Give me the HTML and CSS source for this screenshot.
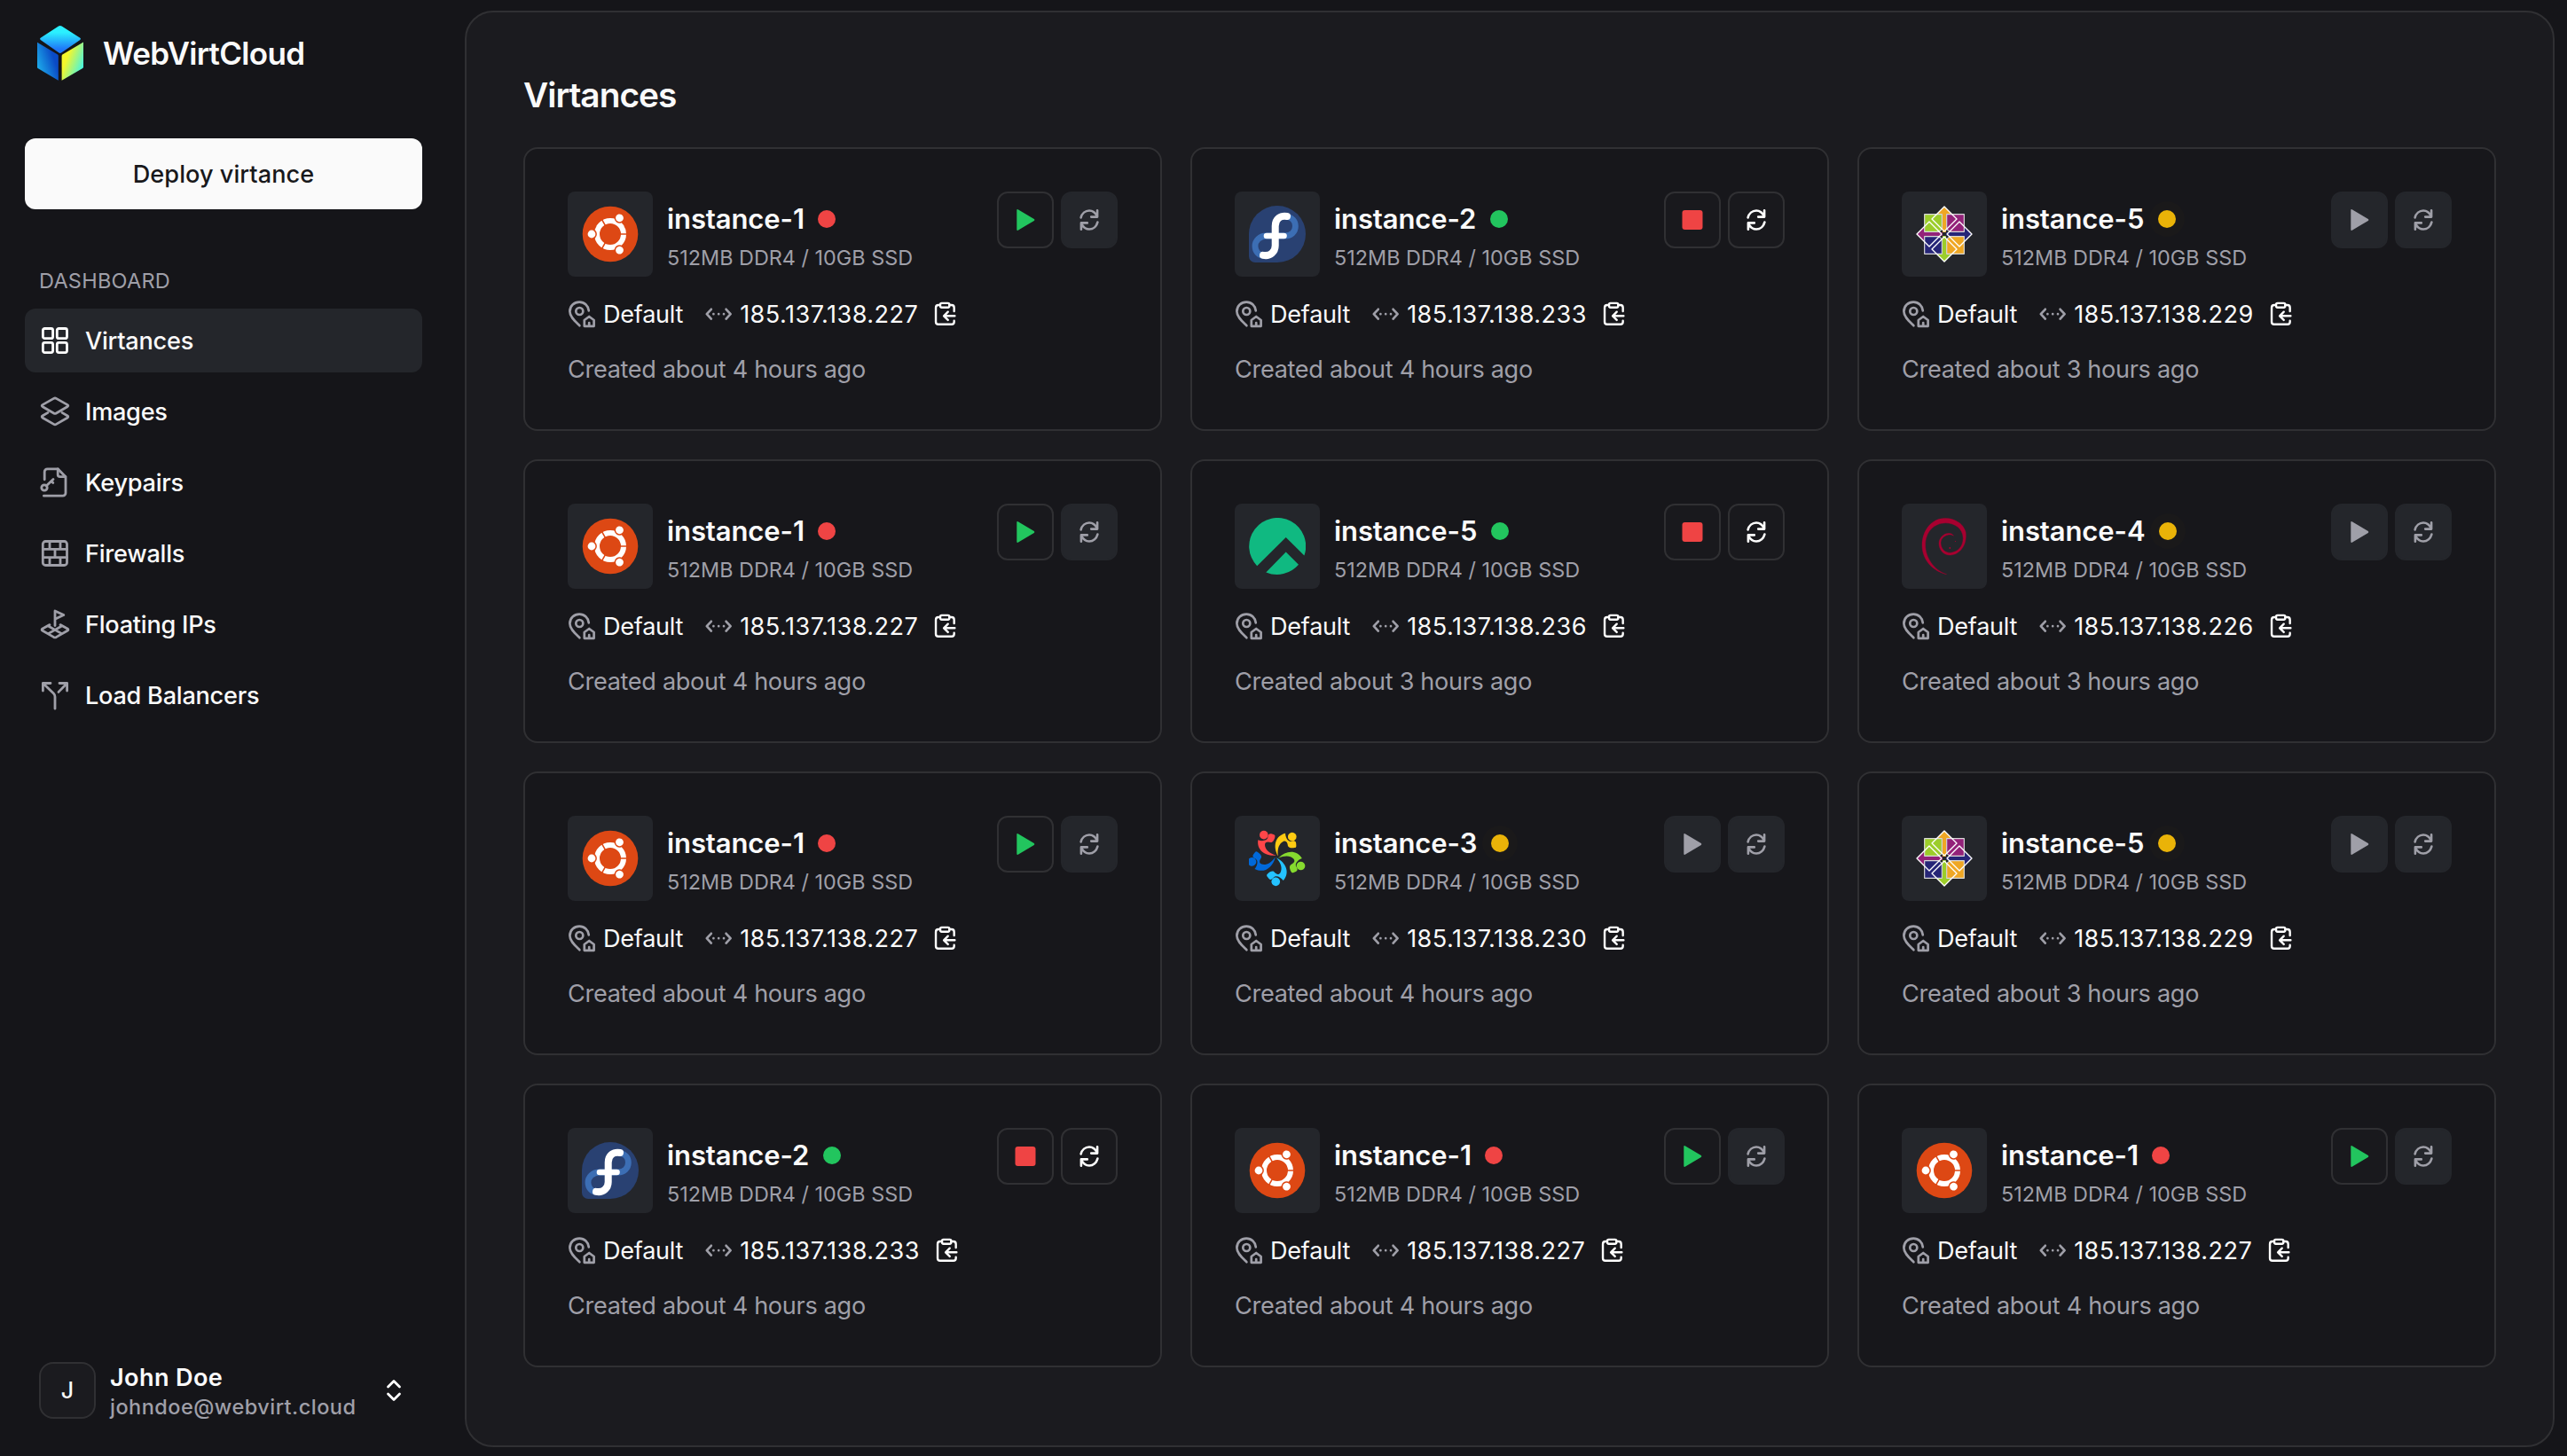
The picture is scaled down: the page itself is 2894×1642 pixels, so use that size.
FILE: index.html
```html
<!DOCTYPE html>
<html lang="en">
<head>
<meta charset="utf-8">
<title>Virtances - WebVirtCloud</title>
<link rel="stylesheet" href="styles.css">
</head>
<body>
<svg class="sprite" aria-hidden="true">
  <defs>
    <linearGradient id="cube-top" x1="0" y1="0" x2="0" y2="1"><stop offset=".25" stop-color="#2bf0ff"/><stop offset=".85" stop-color="#1f78f8"/></linearGradient>
    <linearGradient id="cube-left" x1=".75" y1=".35" x2="0" y2=".8"><stop offset="0" stop-color="#0a4ac6"/><stop offset="1" stop-color="#1fb6ee"/></linearGradient>
    <linearGradient id="cube-right" x1=".2" y1=".3" x2=".9" y2=".75"><stop offset=".1" stop-color="#f5f62b"/><stop offset="1" stop-color="#4af5dc"/></linearGradient>
  </defs>
  <symbol id="logo" viewBox="42 28 52 64">
    <path fill="url(#cube-top)" d="M66 29.6q1.800-1.200 3.600 0L90.300 42.800q1.400 1.100 0 2.200L69.500 59.300q-1.700 1.200-3.400 0L45.700 45q-1.400-1.100 0-2.200z"/>
    <path fill="url(#cube-left)" d="M41.800 47.600L65 61.500q.8.600.8 1.600V90.700L42.600 76.900q-.8-.6-.8-1.600z"/>
    <path fill="url(#cube-right)" d="M94 47.600L70.400 61.500q-.8.600-.8 1.600V90.700L93.200 76.900q.8-.6.8-1.600z"/>
  </symbol>
  <symbol id="grid" viewBox="0 0 18 18"><rect x="2.200" y="2.250" width="5.600" height="5.600" rx="1"/><rect x="10.150" y="2.250" width="5.600" height="5.600" rx="1"/><rect x="2.200" y="10.200" width="5.600" height="5.600" rx="1"/><rect x="10.150" y="10.200" width="5.600" height="5.600" rx="1"/></symbol>
  <symbol id="layers" viewBox="0 0 18 18"><path d="M8.300 1.700q.7-.4 1.400 0L15.900 5.200q1 .6 0 1.200L9.700 10q-.7.400-1.400 0L2.100 6.400q-1-.6 0-1.200z"/><path d="M5 9.700L2.100 11.400q-1 .6 0 1.200L8.300 16.200q.7.400 1.400 0L15.900 12.600q1-.6 0-1.200L13 9.700"/></symbol>
  <symbol id="keyfile" viewBox="0 0 18 18"><path d="M3.100 7.400V3a1.600 1.600 0 0 1 1.600-1.600H10.600L15 5.900V15a1.600 1.600 0 0 1-1.600 1.600H2.700"/><path d="M10.600 1.500V4.600a1.200 1.200 0 0 0 1.200 1.200H14.900"/><circle cx="3" cy="12" r="1.600"/><path d="M4.200 10.900L8 7.200M6.900 8.300L7.900 9.300"/></symbol>
  <symbol id="wall" viewBox="0 0 18 18"><rect x="2.150" y="2.250" width="13.600" height="13.500" rx="1.500"/><path d="M2.200 6.700H15.700M2.200 11.300H15.700M6 2.300V6.700M12 2.300V6.700M9 6.700V11.300M6 11.300V15.700M12 11.300V15.700"/></symbol>
  <symbol id="flag" viewBox="0 0 18 18"><path d="M9 9.800V1.500L13.900 3.800L9 6.100"/><path d="M6 9.300L2 11.500q-.9.600 0 1.100L8.200 16.200q.8.400 1.600 0L16 12.600q.9-.5 0-1.100L12 9.300M5.200 14.300L12.800 10M12.800 14.300L5.200 10"/></symbol>
  <symbol id="split" viewBox="0 0 18 18"><path d="M2.200 6.500V2.250H6.500M2.200 2.250L8.200 8q.8.800.8 1.900V16.600M11.500 2.250H15.800V6.500M15.800 2.250L11 7.200"/></symbol>
  <symbol id="updown" viewBox="0 0 36 36"><path d="M11.500 14L18 7.500L24.500 14M11.500 22L18 28.500L24.500 22"/></symbol>
  <symbol id="pin" viewBox="0 0 18 18"><path d="M6.700 15.600C4.200 13.200 1.200 10.700 1.200 7.600C1.200 4.400 3.700 2.300 6.600 2.300S11.700 4.500 11.900 7.200"/><circle cx="6.650" cy="7.500" r="2"/><path d="M9.400 12.500L12.100 10.500L14.800 12.500V15.900H9.400zM12.100 15.600V14"/></symbol>
  <symbol id="net" viewBox="0 0 18 18"><path d="M4.900 6.400L2.400 9.100L4.900 11.800M13.300 6.400L15.800 9.100L13.300 11.800"/><path d="M6.200 9.100h.01M9.100 9.100h.01M12 9.100h.01"/></symbol>
  <symbol id="clip" viewBox="0 0 18 18"><path d="M5.900 3.400H5A1.600 1.600 0 0 0 3.400 5V14A1.600 1.600 0 0 0 5 15.600H13.400A1.600 1.600 0 0 0 15 14V13.300M15 7.300V5A1.600 1.600 0 0 0 13.400 3.400H12.100"/><rect x="6.200" y="2.200" width="5.800" height="2.700" rx=".9"/><path d="M15.400 10.300H8.600M11.100 7.700L8.500 10.300L11.100 12.900"/></symbol>
  <symbol id="sync" viewBox="0 0 32 32"><path d="M6.600 13.400C7.800 8.800 11.500 5.500 16 5.500C19.800 5.500 22.800 7.600 24.900 12M25.100 5.200V12.600H18.200"/><path d="M25.400 18.600C24.200 23.200 20.500 26.500 16 26.500C12.200 26.500 9.200 24.400 7.100 20M6.900 26.800V19.400H13.800"/></symbol>
  <symbol id="play" viewBox="0 0 32 32"><path d="M6.300 5.200q0-1.700 1.400-.9L25.800 15q1.200.9 0 1.900L7.700 27.700q-1.400.8-1.400-.9z"/></symbol>
  <symbol id="stop" viewBox="0 0 32 32"><rect x="4.500" y="5" width="23" height="22" rx="3"/></symbol>

  <symbol id="ubuntu" viewBox="-32 -32 64 64">
    <circle r="31.300" fill="#dd4814"/>
    <circle r="15" fill="none" stroke="#fff" stroke-width="6"/>
    <g id="ub-arm"><path d="M10 0H20" stroke="#dd4814" stroke-width="1.600"/><circle cx="-21" r="5.900" fill="#dd4814"/><circle cx="-21" r="4.400" fill="#fff"/></g>
    <use href="#ub-arm" transform="rotate(120)"/><use href="#ub-arm" transform="rotate(240)"/>
  </symbol>
  <symbol id="fedora" viewBox="0 0 64 64">
    <path fill="#294172" d="M32 0A32 32 0 0 1 32 64H7A7 7 0 0 1 0 57V32A32 32 0 0 1 32 0z"/>
    <g fill="none" stroke-linecap="round"><path stroke="#3c6eb4" stroke-width="6.800" d="M42 12C49 13 52.400 18 52.400 23C52.400 29.500 47.500 34 41 34H20C12 34 7 39.500 7 45.500C7 51.500 11 56 16 56"/>
    <path stroke="#fff" stroke-width="8" d="M43 12C35.500 10.600 29.700 15 29.700 23V45C29.700 52 24 57.500 16 55.800"/><path stroke="#fff" stroke-width="6.600" d="M20 34H39.500"/></g>
  </symbol>
  <symbol id="rocky" viewBox="0 0 64 64"><path fill="#10b981" d="M9.200 54.200A32 32 0 1 1 62.400 42.600L41.700 22zM19.300 61.400L41.700 38.500L56 52.800A32 32 0 0 1 19.300 61.400z"/></symbol>
  <symbol id="debian" viewBox="0 0 64 64"><path fill="#a80030" stroke="#a80030" stroke-width=".4" d="M34.300 63.700C16 59 7 45 7 31C7 14 18 .6 32.500 .6C39 .3 44 2.500 47 4.500C51 6.500 54 10 56 16C58 30 50 41.600 38.500 42C30 42 26 35 26 29C26 22 32 17 37.500 17.500C40 17.600 41.500 18.700 42.500 20.200C40 18.800 38 18.700 36 19.200C31 20.500 27.700 24 28 29C28.300 35 33 39.700 39 39.400C47 38.500 53 33 53.200 23C53 12 44 6 33.500 5.800C20 6 10.600 16 10.600 31C10.600 44 20 59 34.300 63.700z"/><circle cx="38.300" cy="34" r=".9" fill="#a80030"/><circle cx="44.500" cy="26.500" r=".6" fill="#a80030"/></symbol>
  <symbol id="almalinux" viewBox="84 78 192 192">
    <g fill="#ff4649"><circle cx="134.500" cy="95" r="14.500"/><path d="M177 164C138 168 110 146 115 112C128 117 146 115 148 103Q149 88 160 91L169 94Q174 96 172 102C170 112 165 120 158 120C147 117 138 118 138 129C139 144 152 157 177 164z"/></g>
    <g transform="rotate(68 178 169)" fill="#ffcb12"><circle cx="134.500" cy="95" r="14.500"/><path d="M177 164C138 168 110 146 115 112C128 117 146 115 148 103Q149 88 160 91L169 94Q174 96 172 102C170 112 165 120 158 120C147 117 138 118 138 129C139 144 152 157 177 164z"/></g>
    <g transform="rotate(140 178 170)" fill="#86da2f"><circle cx="134.500" cy="95" r="14.500"/><path d="M177 164C138 168 110 146 115 112C128 117 146 115 148 103Q149 88 160 91L169 94Q174 96 172 102C170 112 165 120 158 120C147 117 138 118 138 129C139 144 152 157 177 164z"/></g>
    <g transform="rotate(213 178 168)" fill="#24c2ff"><circle cx="134.500" cy="95" r="14.500"/><path d="M177 164C138 168 110 146 115 112C128 117 146 115 148 103Q149 88 160 91L169 94Q174 96 172 102C170 112 165 120 158 120C147 117 138 118 138 129C139 144 152 157 177 164z"/></g>
    <g transform="rotate(290 179 169)" fill="#0069da"><circle cx="134.500" cy="95" r="14.500"/><path d="M177 164C138 168 110 146 115 112C128 117 146 115 148 103Q149 88 160 91L169 94Q174 96 172 102C170 112 165 120 158 120C147 117 138 118 138 129C139 144 152 157 177 164z"/></g>
  </symbol>
  <symbol id="centos" viewBox="78 78 192 192">
    <path fill="#efa724" d="M174 80L201 107H180V168H168V107H147z"/><path fill="#932279" d="M80 174L107 147V168H168V180H107V201z"/><path fill="#262577" d="M268 174L241 147V168H180V180H241V201z"/><path fill="#9ccd2a" d="M174 268L201 241H180V180H168V241H147z"/>
    <g stroke="#d9d9d9" stroke-width="3.500"><path fill="#9ccd2a" d="M107 107H166V157L155 166H107z"/><path fill="#932279" d="M182 107H241V166H193L182 157z"/><path fill="#262577" d="M107 182H155L166 191V241H107z"/><path fill="#efa724" d="M193 182H241V241H182V191z"/></g>
    <path fill="none" stroke="#fff" stroke-width="4" d="M174 81L216 123L174 165L132 123zM174 183L216 225L174 267L132 225zM81 174L123 132L165 174L123 216zM183 174L225 132L267 174L225 216z"/>
    <circle cx="174" cy="174" r="7" fill="#24262a"/>
  </symbol>
</svg>

<div class="app">
  <aside class="sidebar">
    <div class="brand"><svg class="brand-mark"><use href="#logo"/></svg><span>WebVirtCloud</span></div>
    <button class="deploy">Deploy virtance</button>
    <h2 class="nav-title">DASHBOARD</h2>
    <nav class="nav">
      <a class="nav-item active"><svg class="icon"><use href="#grid"/></svg><span>Virtances</span></a>
      <a class="nav-item"><svg class="icon"><use href="#layers"/></svg><span>Images</span></a>
      <a class="nav-item"><svg class="icon"><use href="#keyfile"/></svg><span>Keypairs</span></a>
      <a class="nav-item"><svg class="icon"><use href="#wall"/></svg><span>Firewalls</span></a>
      <a class="nav-item"><svg class="icon"><use href="#flag"/></svg><span>Floating IPs</span></a>
      <a class="nav-item"><svg class="icon"><use href="#split"/></svg><span>Load Balancers</span></a>
    </nav>
    <div class="account">
      <span class="avatar">J</span>
      <div class="who"><span class="name">John Doe</span><span class="email">johndoe@webvirt.cloud</span></div>
      <svg class="switcher"><use href="#updown"/></svg>
    </div>
  </aside>

  <main class="panel">
    <h1 class="title">Virtances</h1>
    <div class="cards">
      <article class="card">
        <header class="head"><div class="os"><svg><use href="#ubuntu"/></svg></div><div class="info"><h3>instance-1<i class="dot off"></i></h3><p>512MB DDR4 / 10GB SSD</p></div><div class="acts"><button class="act start"><svg><use href="#play"/></svg></button><button class="act" disabled><svg><use href="#sync"/></svg></button></div></header>
        <div class="meta"><svg class="m-icon"><use href="#pin"/></svg><span class="region">Default</span><svg class="m-icon"><use href="#net"/></svg><span class="ip">185.137.138.227</span><svg class="copy"><use href="#clip"/></svg></div>
        <p class="created">Created about 4 hours ago</p>
      </article>
      <article class="card">
        <header class="head"><div class="os"><svg><use href="#fedora"/></svg></div><div class="info"><h3>instance-2<i class="dot on"></i></h3><p>512MB DDR4 / 10GB SSD</p></div><div class="acts"><button class="act halt"><svg><use href="#stop"/></svg></button><button class="act"><svg><use href="#sync"/></svg></button></div></header>
        <div class="meta"><svg class="m-icon"><use href="#pin"/></svg><span class="region">Default</span><svg class="m-icon"><use href="#net"/></svg><span class="ip">185.137.138.233</span><svg class="copy"><use href="#clip"/></svg></div>
        <p class="created">Created about 4 hours ago</p>
      </article>
      <article class="card">
        <header class="head"><div class="os"><svg><use href="#centos"/></svg></div><div class="info"><h3>instance-5<i class="dot busy"></i></h3><p>512MB DDR4 / 10GB SSD</p></div><div class="acts"><button class="act start" disabled><svg><use href="#play"/></svg></button><button class="act" disabled><svg><use href="#sync"/></svg></button></div></header>
        <div class="meta"><svg class="m-icon"><use href="#pin"/></svg><span class="region">Default</span><svg class="m-icon"><use href="#net"/></svg><span class="ip">185.137.138.229</span><svg class="copy"><use href="#clip"/></svg></div>
        <p class="created">Created about 3 hours ago</p>
      </article>
      <article class="card">
        <header class="head"><div class="os"><svg><use href="#ubuntu"/></svg></div><div class="info"><h3>instance-1<i class="dot off"></i></h3><p>512MB DDR4 / 10GB SSD</p></div><div class="acts"><button class="act start"><svg><use href="#play"/></svg></button><button class="act" disabled><svg><use href="#sync"/></svg></button></div></header>
        <div class="meta"><svg class="m-icon"><use href="#pin"/></svg><span class="region">Default</span><svg class="m-icon"><use href="#net"/></svg><span class="ip">185.137.138.227</span><svg class="copy"><use href="#clip"/></svg></div>
        <p class="created">Created about 4 hours ago</p>
      </article>
      <article class="card">
        <header class="head"><div class="os"><svg><use href="#rocky"/></svg></div><div class="info"><h3>instance-5<i class="dot on"></i></h3><p>512MB DDR4 / 10GB SSD</p></div><div class="acts"><button class="act halt"><svg><use href="#stop"/></svg></button><button class="act"><svg><use href="#sync"/></svg></button></div></header>
        <div class="meta"><svg class="m-icon"><use href="#pin"/></svg><span class="region">Default</span><svg class="m-icon"><use href="#net"/></svg><span class="ip">185.137.138.236</span><svg class="copy"><use href="#clip"/></svg></div>
        <p class="created">Created about 3 hours ago</p>
      </article>
      <article class="card">
        <header class="head"><div class="os"><svg><use href="#debian"/></svg></div><div class="info"><h3>instance-4<i class="dot busy"></i></h3><p>512MB DDR4 / 10GB SSD</p></div><div class="acts"><button class="act start" disabled><svg><use href="#play"/></svg></button><button class="act" disabled><svg><use href="#sync"/></svg></button></div></header>
        <div class="meta"><svg class="m-icon"><use href="#pin"/></svg><span class="region">Default</span><svg class="m-icon"><use href="#net"/></svg><span class="ip">185.137.138.226</span><svg class="copy"><use href="#clip"/></svg></div>
        <p class="created">Created about 3 hours ago</p>
      </article>
      <article class="card">
        <header class="head"><div class="os"><svg><use href="#ubuntu"/></svg></div><div class="info"><h3>instance-1<i class="dot off"></i></h3><p>512MB DDR4 / 10GB SSD</p></div><div class="acts"><button class="act start"><svg><use href="#play"/></svg></button><button class="act" disabled><svg><use href="#sync"/></svg></button></div></header>
        <div class="meta"><svg class="m-icon"><use href="#pin"/></svg><span class="region">Default</span><svg class="m-icon"><use href="#net"/></svg><span class="ip">185.137.138.227</span><svg class="copy"><use href="#clip"/></svg></div>
        <p class="created">Created about 4 hours ago</p>
      </article>
      <article class="card">
        <header class="head"><div class="os"><svg><use href="#almalinux"/></svg></div><div class="info"><h3>instance-3<i class="dot busy"></i></h3><p>512MB DDR4 / 10GB SSD</p></div><div class="acts"><button class="act start" disabled><svg><use href="#play"/></svg></button><button class="act" disabled><svg><use href="#sync"/></svg></button></div></header>
        <div class="meta"><svg class="m-icon"><use href="#pin"/></svg><span class="region">Default</span><svg class="m-icon"><use href="#net"/></svg><span class="ip">185.137.138.230</span><svg class="copy"><use href="#clip"/></svg></div>
        <p class="created">Created about 4 hours ago</p>
      </article>
      <article class="card">
        <header class="head"><div class="os"><svg><use href="#centos"/></svg></div><div class="info"><h3>instance-5<i class="dot busy"></i></h3><p>512MB DDR4 / 10GB SSD</p></div><div class="acts"><button class="act start" disabled><svg><use href="#play"/></svg></button><button class="act" disabled><svg><use href="#sync"/></svg></button></div></header>
        <div class="meta"><svg class="m-icon"><use href="#pin"/></svg><span class="region">Default</span><svg class="m-icon"><use href="#net"/></svg><span class="ip">185.137.138.229</span><svg class="copy"><use href="#clip"/></svg></div>
        <p class="created">Created about 3 hours ago</p>
      </article>
      <article class="card">
        <header class="head"><div class="os"><svg><use href="#fedora"/></svg></div><div class="info"><h3>instance-2<i class="dot on"></i></h3><p>512MB DDR4 / 10GB SSD</p></div><div class="acts"><button class="act halt"><svg><use href="#stop"/></svg></button><button class="act"><svg><use href="#sync"/></svg></button></div></header>
        <div class="meta"><svg class="m-icon"><use href="#pin"/></svg><span class="region">Default</span><svg class="m-icon"><use href="#net"/></svg><span class="ip">185.137.138.233</span><svg class="copy"><use href="#clip"/></svg></div>
        <p class="created">Created about 4 hours ago</p>
      </article>
      <article class="card">
        <header class="head"><div class="os"><svg><use href="#ubuntu"/></svg></div><div class="info"><h3>instance-1<i class="dot off"></i></h3><p>512MB DDR4 / 10GB SSD</p></div><div class="acts"><button class="act start"><svg><use href="#play"/></svg></button><button class="act" disabled><svg><use href="#sync"/></svg></button></div></header>
        <div class="meta"><svg class="m-icon"><use href="#pin"/></svg><span class="region">Default</span><svg class="m-icon"><use href="#net"/></svg><span class="ip">185.137.138.227</span><svg class="copy"><use href="#clip"/></svg></div>
        <p class="created">Created about 4 hours ago</p>
      </article>
      <article class="card">
        <header class="head"><div class="os"><svg><use href="#ubuntu"/></svg></div><div class="info"><h3>instance-1<i class="dot off"></i></h3><p>512MB DDR4 / 10GB SSD</p></div><div class="acts"><button class="act start"><svg><use href="#play"/></svg></button><button class="act" disabled><svg><use href="#sync"/></svg></button></div></header>
        <div class="meta"><svg class="m-icon"><use href="#pin"/></svg><span class="region">Default</span><svg class="m-icon"><use href="#net"/></svg><span class="ip">185.137.138.227</span><svg class="copy"><use href="#clip"/></svg></div>
        <p class="created">Created about 4 hours ago</p>
      </article>
    </div>
  </main>
</div>
</body>
</html>
```

FILE: styles.css
```css
:root {
  --bg: #151519;
  --panel: #1b1b1f;
  --card: #17171b;
  --line: #303033;
  --tile: #24262b;
  --text: #fafafa;
  --muted: #9f9fa8;
}

* { box-sizing: border-box; margin: 0; padding: 0; }

body {
  background: var(--bg);
  color: var(--text);
  font: 400 27.1px/40px Inter, sans-serif;
  overflow: hidden;
}

button { font: inherit; border: 0; color: inherit; }

svg {
  display: block;
  flex: none;
  fill: none;
  stroke-linecap: round;
  stroke-linejoin: round;
}

.sprite { position: absolute; width: 0; height: 0; }

.app {
  display: flex;
  height: 1642px;
  padding: 12px 14px 10px 0;
}

/* Sidebar */
.sidebar {
  display: flex;
  flex-direction: column;
  width: 524px;
  padding: 16px 48px 20px 28px;
}

.brand {
  display: flex;
  align-items: center;
  gap: 22px;
  height: 64px;
  padding-left: 14px;
  font-size: 35px;
  font-weight: 600;
  letter-spacing: -0.68px;
}

.brand-mark { width: 52px; height: 64px; }

.deploy {
  height: 80px;
  margin-top: 64px;
  padding-top: 2px;
  border-radius: 12px;
  background: #fafafa;
  color: #18181b;
  font-weight: 550;
  letter-spacing: 0.06px;
}

.nav-title {
  margin: 61px 0 11px 16px;
  color: var(--muted);
  font-size: 23.500px;
  font-weight: 400;
  line-height: 40px;
  letter-spacing: 0.25px;
}

.nav { display: flex; flex-direction: column; gap: 8px; }

.nav-item {
  display: flex;
  align-items: center;
  gap: 16px;
  height: 72px;
  padding: 0 16px;
  border-radius: 12px;
  font-weight: 500;
  letter-spacing: -0.24px;
}

.nav-item span { padding-top: 2px; }

.nav-item.active { background: var(--tile); }

.icon {
  width: 36px;
  height: 36px;
  stroke: var(--muted);
  stroke-width: 1.4;
}

.active .icon { stroke: #fff; }

.account {
  display: flex;
  align-items: center;
  margin-top: auto;
  padding: 0 14px 9px 16px;
}

.avatar {
  display: grid;
  place-items: center;
  width: 64px;
  height: 64px;
  border: 2px solid var(--line);
  border-radius: 16px;
  background: var(--panel);
  font-size: 25px;
  font-weight: 500;
}

.who { display: flex; flex-direction: column; margin-left: 16px; padding-top: 4px; }
.name { font-weight: 600; line-height: 34px; letter-spacing: 0.37px; }
.email { color: var(--muted); font-size: 23.500px; font-weight: 500; line-height: 32px; letter-spacing: 0.48px; }

.switcher {
  width: 36px;
  height: 36px;
  margin-left: auto;
  stroke: #fff;
  stroke-width: 2.8;
}

/* Content */
.panel {
  flex: 1;
  height: 1620px;
  padding: 65px 64px;
  border: 2px solid var(--line);
  border-radius: 32px;
  background: var(--panel);
}

.title {
  margin-bottom: 31px;
  font-size: 38.800px;
  font-weight: 600;
  line-height: 56px;
  letter-spacing: -1px;
}

.cards {
  display: grid;
  grid-template-columns: repeat(3, 1fr);
  gap: 32px;
}

.card {
  display: flex;
  flex-direction: column;
  gap: 24px;
  height: 320px;
  padding: 48px;
  border: 2px solid var(--line);
  border-radius: 16px;
  background: var(--card);
}

.head { display: flex; height: 96px; }

.os {
  display: grid;
  place-items: center;
  width: 96px;
  height: 96px;
  border-radius: 8px;
  background: var(--tile);
}

.os svg { width: 64px; height: 64px; }

.info { padding: 9px 0 0 16px; }

.info h3 {
  display: flex;
  align-items: center;
  gap: 15.500px;
  font-size: 31px;
  font-weight: 600;
  line-height: 44px;
  letter-spacing: -0.1px;
}

.info p {
  color: var(--muted);
  font-size: 23.400px;
  line-height: 44px;
}

.dot { width: 20px; height: 20px; margin-top: -1px; border-radius: 50%; }
.off { background: #ef4444; }
.on { background: #22c55e; }
.busy { background: #eab308; box-shadow: 0 0 0 10px rgb(234 179 8 / 1.5%); }

.acts { display: flex; gap: 8px; margin-left: auto; }

.act {
  display: grid;
  place-items: center;
  width: 64px;
  height: 64px;
  border: 2px solid var(--line);
  border-radius: 12px;
  background: #19191d;
  stroke: #fff;
  stroke-width: 2.6;
}

.act:disabled { border-color: var(--tile); background: var(--tile); stroke: var(--muted); }
.act svg { width: 32px; height: 32px; }
.start svg, .halt svg { stroke: none; }
.start svg { width: 34px; fill: #22c55e; }
.halt svg { fill: #ef4444; }
.start:disabled svg { fill: var(--muted); }

.meta { display: flex; align-items: center; height: 36px; }
.meta span { padding-top: 2px; }

.m-icon {
  width: 36px;
  height: 36px;
  margin-right: 4px;
  stroke: var(--muted);
  stroke-width: 1.35;
}

.region { margin-right: 22px; letter-spacing: -0.27px; }
.ip { margin-left: 2px; letter-spacing: 0.46px; }

.copy {
  width: 32px;
  height: 32px;
  margin-left: 14px;
  stroke: #fff;
  stroke-width: 1.35;
}

.created { padding-top: 1px; color: var(--muted); letter-spacing: -0.31px; }
```
